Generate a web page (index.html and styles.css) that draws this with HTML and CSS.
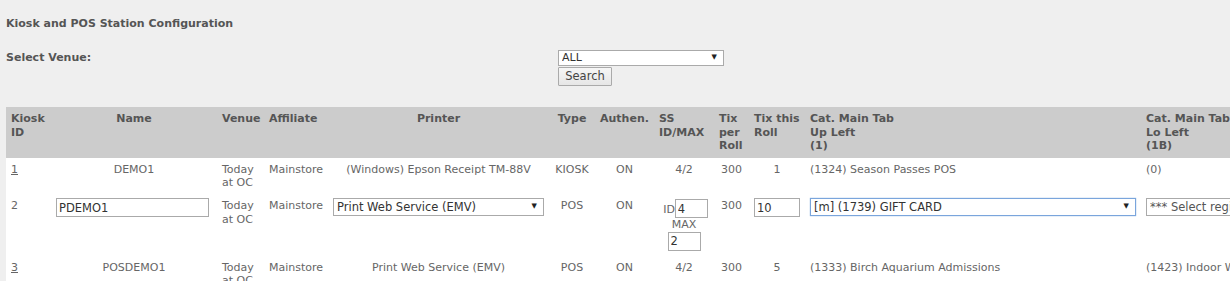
FILE: index.html
```html
<!DOCTYPE html>
<html>
<head>
<meta charset="utf-8">
<title>Kiosk and POS Station Configuration</title>
<link rel="stylesheet" href="styles.css">
</head>
<body>
<h1 class="title">Kiosk and POS Station Configuration</h1>
<form class="venue-form">
  <label class="venue-label" for="venue">Select Venue:</label>
  <div class="venue-ctrl">
    <span class="sel sel-venue"><select id="venue"><option>ALL</option></select></span>
    <button type="button" class="btn">Search</button>
  </div>
</form>
<table class="grid">
  <colgroup>
    <col class="w-id"><col class="w-name"><col class="w-venue"><col class="w-aff"><col class="w-printer"><col class="w-type"><col class="w-auth"><col class="w-ss"><col class="w-tix"><col class="w-roll"><col class="w-cat"><col class="w-cat">
  </colgroup>
  <thead>
    <tr>
      <th>Kiosk<br>ID</th>
      <th class="c">Name</th>
      <th class="c">Venue</th>
      <th>Affiliate</th>
      <th class="c">Printer</th>
      <th class="c">Type</th>
      <th>Authen.</th>
      <th>SS<br>ID/MAX</th>
      <th>Tix<br>per<br>Roll</th>
      <th>Tix this<br>Roll</th>
      <th>Cat. Main Tab<br>Up Left<br>(1)</th>
      <th>Cat. Main Tab<br>Lo Left<br>(1B)</th>
    </tr>
  </thead>
  <tbody>
    <tr>
      <td><a href="#">1</a></td>
      <td class="c">DEMO1</td>
      <td>Today at OC</td>
      <td>Mainstore</td>
      <td class="c">(Windows) Epson Receipt TM-88V</td>
      <td class="c">KIOSK</td>
      <td class="c">ON</td>
      <td class="c">4/2</td>
      <td class="c">300</td>
      <td class="c">1</td>
      <td>(1324) Season Passes POS</td>
      <td>(0)</td>
    </tr>
    <tr>
      <td>2</td>
      <td><input class="inp inp-name" type="text" value="PDEMO1"></td>
      <td>Today at OC</td>
      <td>Mainstore</td>
      <td><span class="sel sel-printer"><select><option>Print Web Service (EMV)</option></select></span></td>
      <td class="c">POS</td>
      <td class="c">ON</td>
      <td class="c ss"><span class="ss-id">ID</span><input class="inp inp-ss" type="text" value="4"><br>MAX<br><input class="inp inp-ss" type="text" value="2"></td>
      <td class="c">300</td>
      <td class="c"><input class="inp inp-roll" type="text" value="10"></td>
      <td><span class="sel sel-cat focus"><select><option>[m] (1739) GIFT CARD</option></select></span></td>
      <td><span class="sel sel-cat2"><select><option>*** Select region ***</option></select></span></td>
    </tr>
    <tr>
      <td><a href="#">3</a></td>
      <td class="c">POSDEMO1</td>
      <td>Today at OC</td>
      <td>Mainstore</td>
      <td class="c">Print Web Service (EMV)</td>
      <td class="c">POS</td>
      <td class="c">ON</td>
      <td class="c">4/2</td>
      <td class="c">300</td>
      <td class="c">5</td>
      <td>(1333) Birch Aquarium Admissions</td>
      <td>(1423) Indoor Water Park</td>
    </tr>
  </tbody>
</table>
</body>
</html>
```
FILE: styles.css
```css
html, body {
  overflow: hidden;
}
body {
  margin: 0;
  padding: 0 6px;
  background: #efefef;
  color: #666;
  font-family: "DejaVu Sans", Verdana, sans-serif;
  font-size: 11px;
  line-height: 13.4px;
}
.title {
  margin: 17px 0 0;
  font-size: 11px;
  font-weight: bold;
  color: #555;
  line-height: 13.4px;
}
.venue-form {
  display: grid;
  grid-template-columns: 552px auto;
  margin-top: 20px;
  align-items: start;
}
.venue-label {
  font-weight: bold;
  color: #555;
  padding-top: 1px;
}
.venue-ctrl {
  display: flex;
  flex-direction: column;
  align-items: flex-start;
}
.sel {
  position: relative;
  display: inline-block;
  vertical-align: top;
}
.sel select {
  appearance: none;
  -webkit-appearance: none;
  display: block;
  box-sizing: border-box;
  width: 100%;
  height: 18px;
  margin: 0;
  padding: 0 16px 0 3px;
  border: 1px solid #aaa;
  border-radius: 0;
  background: #fff;
  color: #333;
  font-family: "DejaVu Sans", Verdana, sans-serif;
  font-size: 11.5px;
  line-height: 16px;
}
.sel::after {
  content: "\25BC";
  position: absolute;
  right: 7px;
  top: 4px;
  font-size: 7px;
  line-height: 8px;
  color: #222;
  pointer-events: none;
}
.sel-venue {
  width: 166px;
}
.sel-venue select {
  height: 16px;
  line-height: 14px;
  font-size: 11px;
}
.sel-venue::after {
  top: 3px;
}
.btn {
  box-sizing: border-box;
  margin: 1px 0 0;
  width: 54px;
  height: 19px;
  padding: 0;
  border: 1px solid #aaa;
  border-radius: 1px;
  background: linear-gradient(#f6f6f6, #e6e6e6);
  color: #444;
  font-family: "DejaVu Sans", Verdana, sans-serif;
  font-size: 11.5px;
  line-height: 17px;
}
.grid {
  margin-top: 21px;
  border-collapse: collapse;
  table-layout: fixed;
  width: 1471px;
  background: #fff;
}
.w-id { width: 45px; }
.w-name { width: 166px; }
.w-venue { width: 47px; }
.w-aff { width: 64px; }
.w-printer { width: 221px; }
.w-type { width: 46px; }
.w-auth { width: 59px; }
.w-ss { width: 60px; }
.w-tix { width: 35px; }
.w-roll { width: 56px; }
.w-cat { width: 336px; }
.grid th {
  background: #ccc;
  color: #555;
  font-weight: bold;
  text-align: left;
  vertical-align: top;
  padding: 5px;
  height: 39px;
}
.grid td {
  padding: 5px;
  vertical-align: top;
  text-align: left;
  white-space: normal;
}
.grid .c {
  text-align: center;
}
.grid a {
  color: #666;
  text-decoration: underline;
}
.ss-id {
  margin-left: 3px;
}
.inp {
  box-sizing: border-box;
  height: 19px;
  margin: 0;
  padding: 0 2px;
  border: 1px solid #aaa;
  border-radius: 0;
  background: #fff;
  color: #333;
  font-family: "DejaVu Sans", Verdana, sans-serif;
  font-size: 11.5px;
  vertical-align: baseline;
}
.inp-name {
  width: 153px;
  margin-top: -1px;
  display: block;
}
.inp-ss {
  width: 33px;
}
.inp-roll {
  width: 46px;
  display: block;
  margin-top: -1px;
}
.sel-printer {
  width: 211px;
  margin-top: -1px;
}
.sel-cat {
  width: 326px;
  margin-top: -1px;
}
.sel-cat.focus select {
  border-color: #7aa5dc;
  box-shadow: 0 0 1px #7aa5dc;
}
.sel-cat2 {
  width: 326px;
  margin-top: -1px;
}
.sel-cat2 select {
  color: #555;
}
```
